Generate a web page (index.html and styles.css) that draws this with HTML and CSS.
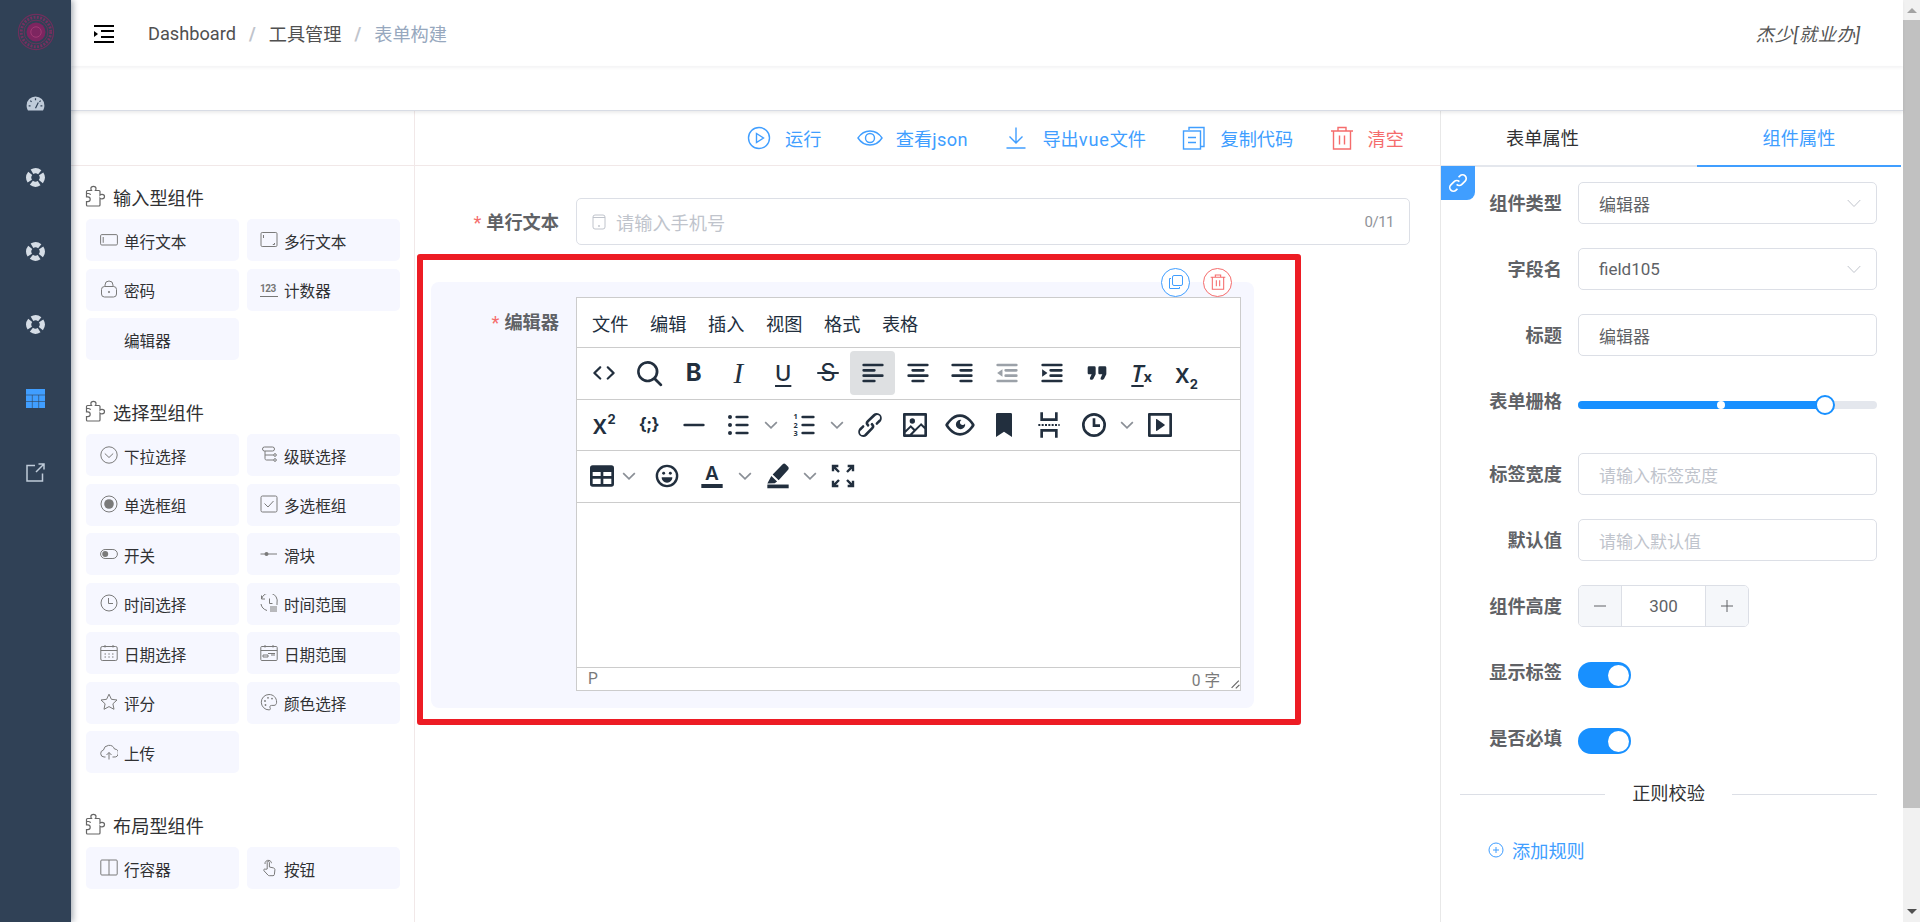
FILE: index.html
```html
<!DOCTYPE html>
<html lang="zh-CN">
<head>
<meta charset="utf-8">
<title>表单构建</title>
<link rel="stylesheet" href="styles.css">
</head>
<body>
<svg class="sprite" xmlns="http://www.w3.org/2000/svg">
  <!-- toolbar -->
  <symbol id="t-code" viewBox="0 0 24 24"><path d="M9.8 15.7c.3.3.3.8 0 1-.3.4-.9.4-1.2 0l-4.4-4.1a.8.8 0 010-1.2l4.4-4.2c.3-.3.9-.3 1.2 0 .3.3.3.8 0 1.1L6 12l3.8 3.7zm4.4 0c-.3.3-.3.8 0 1 .3.4.9.4 1.2 0l4.4-4.1c.3-.3.3-.9 0-1.2l-4.4-4.2a.8.8 0 00-1.2 0c-.3.3-.3.8 0 1.1L18 12l-3.8 3.7z"/></symbol>
  <symbol id="t-search" viewBox="0 0 24 24"><path d="M16 17.3a8 8 0 111.4-1.4l4.3 4.4a1 1 0 01-1.4 1.4l-4.4-4.3zm-5-.3a6 6 0 100-12 6 6 0 000 12z"/></symbol>
  <symbol id="t-al" viewBox="0 0 24 24"><path d="M5 5h14a1 1 0 010 2H5a1 1 0 110-2zm0 4h8a1 1 0 010 2H5a1 1 0 010-2zm0 8h8a1 1 0 010 2H5a1 1 0 010-2zm0-4h14a1 1 0 010 2H5a1 1 0 010-2z"/></symbol>
  <symbol id="t-ac" viewBox="0 0 24 24"><path d="M5 5h14a1 1 0 010 2H5a1 1 0 110-2zm3 4h8a1 1 0 010 2H8a1 1 0 010-2zm0 8h8a1 1 0 010 2H8a1 1 0 010-2zm-3-4h14a1 1 0 010 2H5a1 1 0 010-2z"/></symbol>
  <symbol id="t-ar" viewBox="0 0 24 24"><path d="M5 5h14a1 1 0 010 2H5a1 1 0 110-2zm6 4h8a1 1 0 010 2h-8a1 1 0 010-2zm0 8h8a1 1 0 010 2h-8a1 1 0 010-2zm-6-4h14a1 1 0 010 2H5a1 1 0 010-2z"/></symbol>
  <symbol id="t-outdent" viewBox="0 0 24 24"><path d="M5 5h14a1 1 0 010 2H5a1 1 0 110-2zm6 4h8a1 1 0 010 2h-8a1 1 0 010-2zm0 4h8a1 1 0 010 2h-8a1 1 0 010-2zM5 17h14a1 1 0 010 2H5a1 1 0 010-2zM8.600 9.200v5.600L4.600 12z"/></symbol>
  <symbol id="t-indent" viewBox="0 0 24 24"><path d="M5 5h14a1 1 0 010 2H5a1 1 0 110-2zm6 4h8a1 1 0 010 2h-8a1 1 0 010-2zm0 4h8a1 1 0 010 2h-8a1 1 0 010-2zM5 17h14a1 1 0 010 2H5a1 1 0 010-2zM4.600 9.200v5.600l4-2.800z"/></symbol>
  <symbol id="t-quote" viewBox="0 0 24 24"><path d="M7.500 17h.9c.4 0 .7-.2.9-.6L11 13V8a1 1 0 00-1-1H6a1 1 0 00-1 1v4c0 .6.4 1 1 1h2l-1.300 2.700a1 1 0 00.8 1.300zm8 0h.9c.4 0 .7-.2.9-.6L19 13V8a1 1 0 00-1-1h-4a1 1 0 00-1 1v4c0 .6.4 1 1 1h2l-1.300 2.700a1 1 0 00.8 1.300z"/></symbol>
  <symbol id="t-hr" viewBox="0 0 24 24"><rect x="4" y="11" width="16" height="2" rx="1"/></symbol>
  <symbol id="t-ul" viewBox="0 0 24 24"><path d="M11 5h8a1 1 0 010 2h-8a1 1 0 010-2zm0 6h8a1 1 0 010 2h-8a1 1 0 010-2zm0 6h8a1 1 0 010 2h-8a1 1 0 010-2z"/><circle cx="6" cy="6" r="1.500"/><circle cx="6" cy="12" r="1.500"/><circle cx="6" cy="18" r="1.500"/></symbol>
  <symbol id="t-ol" viewBox="0 0 24 24"><path d="M11 5h8a1 1 0 010 2h-8a1 1 0 010-2zm0 6h8a1 1 0 010 2h-8a1 1 0 010-2zm0 6h8a1 1 0 010 2h-8a1 1 0 010-2z"/><text x="4.200" y="7.800" class="t-num">1</text><text x="4.200" y="14" class="t-num">2</text><text x="4.200" y="20" class="t-num">3</text></symbol>
  <symbol id="t-link" viewBox="0 0 24 24"><path d="M6.200 12.300a1 1 0 011.400 1.400l-2 2a2 2 0 102.600 2.800l4.800-4.800a1 1 0 000-1.400 1 1 0 111.400-1.300 2.900 2.900 0 010 4L9.600 20a3.900 3.900 0 01-5.500-5.500l2-2zm11.600-.6a1 1 0 01-1.400-1.400l2-2a2 2 0 10-2.600-2.800L11 9.900a1 1 0 000 1.400 1 1 0 11-1.400 1.300 2.900 2.900 0 010-4L14.400 4a3.900 3.900 0 015.500 5.500l-2 2z"/></symbol>
  <symbol id="t-image" viewBox="0 0 24 24"><path d="M5 15.700l3.300-3.200c.3-.3.7-.3 1 0L12 15l4.100-4c.3-.4.8-.4 1 0l2 1.900V5H5v10.700zM5 18v1h3l2.800-2.900-2-2L5 17.900zm14-3l-2.500-2.400-6.400 6.500H19v-4zM4 3h16c.6 0 1 .4 1 1v16c0 .6-.4 1-1 1H4a1 1 0 01-1-1V4c0-.6.4-1 1-1zm6 8a2 2 0 100-4 2 2 0 000 4z"/></symbol>
  <symbol id="t-eye" viewBox="0 0 24 24"><path d="M3.500 12.500c.5.8 1.100 1.600 1.800 2.300 2 2 4.200 3.200 6.700 3.200s4.700-1.200 6.700-3.200a16.200 16.200 0 002.100-2.800 15.700 15.700 0 00-2.100-2.800c-2-2-4.200-3.200-6.700-3.200a9.300 9.300 0 00-6.700 3.200A16.200 16.200 0 003.200 12c0 .2.2.3.3.5zm-2.400-1l.7-1.200L4 7.800C6.200 5.400 8.900 4 12 4c3 0 5.800 1.400 8.100 3.800a18.200 18.200 0 012.800 3.700v1l-.7 1.200-2.100 2.500c-2.300 2.400-5 3.800-8.100 3.800-3 0-5.800-1.400-8.100-3.800a18.200 18.200 0 01-2.800-3.700 1 1 0 010-1zm12-3.300a2 2 0 102.700 2.600 3.500 3.500 0 11-2.700-2.600z"/></symbol>
  <symbol id="t-bookmark" viewBox="0 0 24 24"><path d="M6 4v17l6-4 6 4V4a1 1 0 00-1-1H7a1 1 0 00-1 1z"/></symbol>
  <symbol id="t-break" viewBox="0 0 24 24"><path d="M6.500 2.500v5.500h11V2.500M6.500 21.500V16h11v5.500" class="t-line"/><path d="M4 12h16" class="t-dots"/></symbol>
  <symbol id="t-clock" viewBox="0 0 24 24"><path d="M12 19a7 7 0 100-14 7 7 0 000 14zm0 2a9 9 0 110-18 9 9 0 010 18z"/><path d="M12 7v5.500h4.500" class="t-line"/></symbol>
  <symbol id="t-media" viewBox="0 0 24 24"><path d="M4 3h16c.6 0 1 .4 1 1v16c0 .6-.4 1-1 1H4a1 1 0 01-1-1V4c0-.6.4-1 1-1zm1 2v14h14V5H5zm4.800 2.600l5.600 4a.5.5 0 010 .8l-5.600 4A.5.5 0 019 16V8a.5.5 0 01.8-.4z"/></symbol>
  <symbol id="t-table" viewBox="0 0 24 24"><path fill-rule="evenodd" d="M5 4h14a2 2 0 012 2v12a2 2 0 01-2 2H5a2 2 0 01-2-2V6a2 2 0 012-2zm0 5v3h6V9H5zm8 0v3h6V9h-6zM5 14v4h6v-4H5zm8 0v4h6v-4h-6z"/></symbol>
  <symbol id="t-emoji" viewBox="0 0 24 24"><circle cx="12" cy="12" r="7.600" class="t-line t-thin"/><circle cx="9.500" cy="10" r="1.100"/><circle cx="14.500" cy="10" r="1.100"/><path d="M8 13h8c0 2.400-1.700 4-4 4s-4-1.600-4-4z"/></symbol>
  <symbol id="t-bar" viewBox="0 0 24 24"><rect x="4" y="18" width="16" height="3"/></symbol>
  <symbol id="t-brush" viewBox="0 0 24 24"><path d="M15.500 3.200a1.600 1.600 0 012.200 0l1.900 1.900c.6.6.6 1.600 0 2.200l-7.100 7.900-4.500-4.300zM7 12l4.300 4.200-1.800 1.200-5.500.2z"/><rect x="4" y="18.400" width="16" height="2.800"/></symbol>
  <symbol id="t-full" viewBox="0 0 24 24"><path d="M4.500 8.500V4.500h4M19.500 8.500V4.500h-4M4.500 15.500v4h4M19.500 15.500v4h-4M5 5l4 4M19 5l-4 4M5 19l4-4M19 19l-4-4" class="t-line t-thin"/></symbol>
  <symbol id="t-chev" viewBox="0 0 24 24"><path d="M5 8.500l7 7 7-7" class="t-chev"/></symbol>
  <!-- builder toolbar -->
  <symbol id="b-play" viewBox="0 0 24 24"><circle cx="12" cy="12" r="10.500"/><path d="M9.500 7.500l7 4.500-7 4.500z"/></symbol>
  <symbol id="b-eye" viewBox="0 0 26 24"><path d="M1 12c3-4.600 7-7 12-7s9 2.400 12 7c-3 4.600-7 7-12 7S4 16.600 1 12z"/><circle cx="13" cy="12" r="4.500"/></symbol>
  <symbol id="b-down" viewBox="0 0 24 24"><path d="M12 1.500v15.500M5.500 10.500l6.500 6.500 6.500-6.500M2.500 22h19"/></symbol>
  <symbol id="b-copy" viewBox="0 0 24 24"><path d="M7 4V1.500h15V20.500H18"/><rect x="1.500" y="5" width="17" height="18"/><path d="M6 11.500h8M6 16.500h8"/></symbol>
  <symbol id="b-trash" viewBox="0 0 24 24"><path d="M1 5h22M8 5V1.500h8V5M3.500 5v18h17V5M9.500 9.500v9M14.500 9.500v9"/></symbol>
  <symbol id="b-copy2" viewBox="0 0 16 16"><rect x="4.500" y="1.500" width="10" height="10" rx="1.500"/><path d="M3 4.500H1.500V14c0 .3.200.5.500.5h9.500V13"/></symbol>
  <symbol id="b-puzzle" viewBox="0 0 22 22"><path d="M1.500 8.500V6.500c0-.6.400-1 1-1h4a2.900 2.900 0 01-.6-2c0-1.300 1-2.200 2.500-2.200s2.600.9 2.600 2.200c0 .8-.2 1.500-.6 2h3.600c.6 0 1 .4 1 1v3.600c.5-.6 1.200-.8 2-.8 1.300 0 2.500 1 2.500 2.200s-1.200 2.300-2.500 2.300c-.8 0-1.500-.2-2-.7V20c0 .6-.4 1-1 1H2.500c-.6 0-1-.4-1-1v-3.400h1.300c1.400 0 2.400-1 2.400-2.300 0-1.400-1-2.500-2.400-2.500H1.500V8.500h2c1 0 1.900.6 1.900 1.500"/></symbol>
  <!-- component icons -->
  <symbol id="c-input" viewBox="0 0 18 18"><rect x=".6" y="3.600" width="16.800" height="10.400" rx="1.200"/><path d="M3.200 6v5.800"/></symbol>
  <symbol id="c-text" viewBox="0 0 18 18"><rect x="1" y="1.500" width="16" height="14" rx="1.200"/><path d="M3.500 4v3M14.500 13.500v-1.500M12.800 13.500h1.700"/></symbol>
  <symbol id="c-lock" viewBox="0 0 18 18"><rect x="1.500" y="6.500" width="15" height="10.500" rx="3"/><path d="M5 6.500V5a4 4 0 018 0v1.500"/><circle cx="9" cy="12" r=".7"/></symbol>
  <symbol id="c-select" viewBox="0 0 18 18"><circle cx="9" cy="9" r="8.200"/><path d="M4.800 7.500L9 11.500l4.200-4"/></symbol>
  <symbol id="c-casc" viewBox="0 0 18 18"><rect x="2.500" y="1" width="12" height="4" rx="2"/><path d="M5 5v7.500c0 1 .6 1.500 1.500 1.500h7M5 9h8.500"/><circle cx="15" cy="9" r="1.300"/><circle cx="15" cy="14" r="1.300"/></symbol>
  <symbol id="c-radio" viewBox="0 0 18 18"><circle cx="9" cy="9" r="8"/><circle cx="9" cy="9" r="4.800" class="c-fill"/></symbol>
  <symbol id="c-check" viewBox="0 0 18 18"><rect x="1" y="1" width="16" height="16" rx="1.500"/><path d="M4.500 8.500l3.500 3.500 5.500-6"/></symbol>
  <symbol id="c-switch" viewBox="0 0 18 18"><rect x=".6" y="4.500" width="16.800" height="9" rx="4.500"/><circle cx="5.200" cy="9" r="3" class="c-fill"/></symbol>
  <symbol id="c-slider" viewBox="0 0 18 18"><path d="M.5 9h16.500"/><circle cx="6.500" cy="9" r="2" class="c-fill"/></symbol>
  <symbol id="c-time" viewBox="0 0 18 18"><circle cx="9" cy="9" r="8"/><path d="M8.500 4v5.500h4.500"/></symbol>
  <symbol id="c-trange" viewBox="0 0 18 18"><path d="M1.500 5A8 8 0 0117 9v2M1.500 1.500V5H5M1 10c.4 3 2.600 5.500 6 6.500M9.500 4.500v5h3M10 13h7M10 15h7M10 17h7"/></symbol>
  <symbol id="c-date" viewBox="0 0 18 18"><rect x=".8" y="2.500" width="16.400" height="14" rx="1.500"/><path d="M.8 6.500h16.400M5 1v2.500M13 1v2.500M4.500 10h1.500M8.300 10h1.500M12 10h1.500M4.500 13h1.500M8.300 13h1.500M12 13h1.500"/></symbol>
  <symbol id="c-drange" viewBox="0 0 18 18"><rect x=".8" y="2.500" width="16.400" height="14" rx="1"/><path d="M.8 6.500h16.400M5 1v2.500M13 1v2.500M3 13v-2h5v2H3zM8 9.500h7M11 11h4"/></symbol>
  <symbol id="c-star" viewBox="0 0 18 18"><path d="M9 1.200l2.400 5.100 5.600.7-4.100 3.800 1.100 5.500L9 13.600l-5 2.700 1.100-5.500L1 7l5.600-.7z"/></symbol>
  <symbol id="c-palette" viewBox="0 0 18 18"><path d="M9 1.500a7.700 7.700 0 100 15.400c1.400 0 1.700-1 1.100-2-.8-1.300.1-2.500 1.500-2.500h2.400c1.600 0 2.600-1.200 2.600-3.200C16.600 4.600 13.400 1.500 9 1.500z"/><circle cx="5" cy="8" r=".9" class="c-fill"/><circle cx="8" cy="4.800" r=".9" class="c-fill"/><circle cx="12" cy="5.600" r=".9" class="c-fill"/><circle cx="5.500" cy="12" r=".9" class="c-fill"/></symbol>
  <symbol id="c-upload" viewBox="0 0 18 18"><path d="M5.500 14H4a3.500 3.500 0 01-.6-6.900A5.800 5.800 0 0114.500 6a4 4 0 01-.5 8h-1.500M9 16.500V9.500M6.500 12L9 9.500l2.500 2.500"/></symbol>
  <symbol id="c-row" viewBox="0 0 18 18"><rect x=".8" y="1" width="16.400" height="15" rx="1"/><path d="M9 1v15"/></symbol>
  <symbol id="c-button" viewBox="0 0 18 18"><path d="M7.200 10V3.500c0-1.600 2.200-1.600 2.200 0V8l4 .9c1 .2 1.600 1 1.500 2l-.5 4.500c0 .8-.6 1.300-1.400 1.300H9.300c-.5 0-1-.2-1.300-.6L4 11.800c-.9-1.200.8-2.600 1.800-1.500zM5 5a3.300 3.300 0 014-3.600c1.400.2 2.400 1.400 2.500 2.800"/></symbol>
  <symbol id="c-phone" viewBox="0 0 14 16"><rect x="1" y="1" width="12" height="14" rx="2"/><path d="M1 3.500h12"/><circle cx="7" cy="12" r=".6"/></symbol>
  <symbol id="c-blink" viewBox="0 0 24 24"><path d="M10.500 13.500a4 4 0 005.700 0l3.600-3.600a4 4 0 00-5.700-5.700l-1.500 1.500M13.500 10.500a4 4 0 00-5.700 0l-3.600 3.600a4 4 0 005.700 5.700l1.500-1.500"/></symbol>
  <symbol id="c-plus" viewBox="0 0 16 16"><circle cx="8" cy="8" r="7"/><path d="M5 8h6M8 5v6"/></symbol>
  <!-- sidebar -->
  <symbol id="s-ring" viewBox="0 0 20 20"><circle cx="10" cy="10" r="7.100" class="s-ringline"/></symbol>
</svg>

<div class="app">
  <aside class="sidebar">
    <div class="logo">
      <svg viewBox="0 0 40 40" class="logo-svg">
        <circle cx="20" cy="20" r="18.500" class="logo-out"/>
        <circle cx="20" cy="20" r="15.500" class="logo-dash"/>
        <circle cx="20" cy="20" r="12.500" class="logo-in"/>
        <circle cx="20" cy="20" r="10" class="logo-core"/>
        <circle cx="20" cy="20" r="5.500" class="logo-mid"/>
      </svg>
    </div>
    <div class="side-item">
      <svg viewBox="0 0 20 16" class="side-icon side-gauge">
        <path d="M10 .5A9.500 9.500 0 00.5 10c0 2.200.7 4 1.500 5.500h16c.8-1.500 1.500-3.300 1.500-5.500A9.500 9.500 0 0010 .5z" class="gauge-fill"/>
        <path d="M10 2.500v2M4.500 5l1.300 1.300M15.500 5l-1.300 1.300M2.700 10.500h2M15.300 10.500h2M10 13l3-6" class="gauge-mark"/>
      </svg>
    </div>
    <div class="side-item"><svg class="side-icon"><use href="#s-ring"/></svg></div>
    <div class="side-item"><svg class="side-icon"><use href="#s-ring"/></svg></div>
    <div class="side-item"><svg class="side-icon"><use href="#s-ring"/></svg></div>
    <div class="side-item">
      <svg viewBox="0 0 19 19" class="side-icon">
        <rect width="19" height="19" class="grid-fill"/>
        <path d="M0 6h19M0 12.500h19M6.300 6v13M12.700 6v13" class="grid-line"/>
      </svg>
    </div>
    <div class="side-item">
      <svg viewBox="0 0 19 19" class="side-icon">
        <path d="M9 2.500H1v15.500h15.500V10.500M10 9l8-8M12.500 1H18v5.500" class="ext-line"/>
      </svg>
    </div>
  </aside>

  <main class="page">
    <header class="topbar">
      <svg viewBox="0 0 20 18" class="hamburger">
        <rect width="20" height="2"/><rect x="7" y="5" width="13" height="2"/><rect x="7" y="11" width="13" height="2"/><rect y="16" width="20" height="2"/>
        <path d="M0 6v6l4-3z"/>
      </svg>
      <nav class="crumbs">
        <span>Dashboard</span><i>/</i><span>工具管理</span><i>/</i><span class="crumb-now">表单构建</span>
      </nav>
      <div class="user">杰少[就业办]</div>
    </header>
    <div class="tags"></div>

    <div class="builder">
      <section class="palette">
        <div class="palette-top"></div>
        <div class="palette-body">
          <div class="group">
            <h3 class="group-title"><svg class="puzzle"><use href="#b-puzzle"/></svg>输入型组件</h3>
            <div class="group-grid">
              <div class="comp"><svg class="ci"><use href="#c-input"/></svg>单行文本</div>
              <div class="comp"><svg class="ci"><use href="#c-text"/></svg>多行文本</div>
              <div class="comp"><svg class="ci"><use href="#c-lock"/></svg>密码</div>
              <div class="comp"><span class="ci ci-num">123</span>计数器</div>
              <div class="comp"><span class="ci"></span>编辑器</div>
            </div>
          </div>
          <div class="group">
            <h3 class="group-title"><svg class="puzzle"><use href="#b-puzzle"/></svg>选择型组件</h3>
            <div class="group-grid">
              <div class="comp"><svg class="ci"><use href="#c-select"/></svg>下拉选择</div>
              <div class="comp"><svg class="ci"><use href="#c-casc"/></svg>级联选择</div>
              <div class="comp"><svg class="ci"><use href="#c-radio"/></svg>单选框组</div>
              <div class="comp"><svg class="ci"><use href="#c-check"/></svg>多选框组</div>
              <div class="comp"><svg class="ci"><use href="#c-switch"/></svg>开关</div>
              <div class="comp"><svg class="ci"><use href="#c-slider"/></svg>滑块</div>
              <div class="comp"><svg class="ci"><use href="#c-time"/></svg>时间选择</div>
              <div class="comp"><svg class="ci"><use href="#c-trange"/></svg>时间范围</div>
              <div class="comp"><svg class="ci"><use href="#c-date"/></svg>日期选择</div>
              <div class="comp"><svg class="ci"><use href="#c-drange"/></svg>日期范围</div>
              <div class="comp"><svg class="ci"><use href="#c-star"/></svg>评分</div>
              <div class="comp"><svg class="ci"><use href="#c-palette"/></svg>颜色选择</div>
              <div class="comp"><svg class="ci"><use href="#c-upload"/></svg>上传</div>
            </div>
          </div>
          <div class="group">
            <h3 class="group-title"><svg class="puzzle"><use href="#b-puzzle"/></svg>布局型组件</h3>
            <div class="group-grid">
              <div class="comp"><svg class="ci"><use href="#c-row"/></svg>行容器</div>
              <div class="comp"><svg class="ci"><use href="#c-button"/></svg>按钮</div>
            </div>
          </div>
        </div>
      </section>

      <section class="canvas">
        <div class="actions">
          <a class="act"><svg class="act-icon"><use href="#b-play"/></svg>运行</a>
          <a class="act"><svg class="act-icon act-eye"><use href="#b-eye"/></svg><span>查看<span class="lat-json">json</span></span></a>
          <a class="act"><svg class="act-icon"><use href="#b-down"/></svg><span>导出<span class="lat-vue">vue</span>文件</span></a>
          <a class="act"><svg class="act-icon"><use href="#b-copy"/></svg>复制代码</a>
          <a class="act act-danger"><svg class="act-icon"><use href="#b-trash"/></svg>清空</a>
        </div>
        <div class="canvas-body">
          <div class="row-text">
            <label class="form-label"><em>*</em>单行文本</label>
            <div class="text-input">
              <svg class="phone"><use href="#c-phone"/></svg>
              <span class="ph">请输入手机号</span>
              <span class="count">0/11</span>
            </div>
          </div>

          <div class="card">
            <label class="form-label card-label"><em>*</em>编辑器</label>
            <div class="editor">
              <div class="menu">
                <span>文件</span><span>编辑</span><span>插入</span><span>视图</span><span>格式</span><span>表格</span>
              </div>
              <div class="tbar">
                <span class="tb"><svg class="ti"><use href="#t-code"/></svg></span>
                <span class="tb"><svg class="ti"><use href="#t-search"/></svg></span>
                <span class="tb tx tx-b">B</span>
                <span class="tb tx tx-i">I</span>
                <span class="tb tx tx-u">U</span>
                <span class="tb tx tx-s">S</span>
                <span class="tb tb-on"><svg class="ti"><use href="#t-al"/></svg></span>
                <span class="tb"><svg class="ti"><use href="#t-ac"/></svg></span>
                <span class="tb"><svg class="ti"><use href="#t-ar"/></svg></span>
                <span class="tb"><svg class="ti ti-off"><use href="#t-outdent"/></svg></span>
                <span class="tb"><svg class="ti"><use href="#t-indent"/></svg></span>
                <span class="tb"><svg class="ti"><use href="#t-quote"/></svg></span>
                <span class="tb tx tx-clear"><span><i>T</i><small>x</small></span></span>
                <span class="tb tx tx-x"><span>x<sub>2</sub></span></span>
              </div>
              <div class="tbar">
                <span class="tb tx tx-x"><span>x<sup>2</sup></span></span>
                <span class="tb tx tx-cs">{;}</span>
                <span class="tb"><svg class="ti"><use href="#t-hr"/></svg></span>
                <span class="tb"><svg class="ti"><use href="#t-ul"/></svg></span>
                <span class="cv"><svg class="tc"><use href="#t-chev"/></svg></span>
                <span class="tb"><svg class="ti"><use href="#t-ol"/></svg></span>
                <span class="cv"><svg class="tc"><use href="#t-chev"/></svg></span>
                <span class="tb"><svg class="ti"><use href="#t-link"/></svg></span>
                <span class="tb"><svg class="ti"><use href="#t-image"/></svg></span>
                <span class="tb"><svg class="ti"><use href="#t-eye"/></svg></span>
                <span class="tb"><svg class="ti"><use href="#t-bookmark"/></svg></span>
                <span class="tb"><svg class="ti"><use href="#t-break"/></svg></span>
                <span class="tb"><svg class="ti"><use href="#t-clock"/></svg></span>
                <span class="cv"><svg class="tc"><use href="#t-chev"/></svg></span>
                <span class="tb"><svg class="ti"><use href="#t-media"/></svg></span>
              </div>
              <div class="tbar">
                <span class="tb tb-table"><svg class="ti"><use href="#t-table"/></svg></span>
                <span class="cv cv-table"><svg class="tc"><use href="#t-chev"/></svg></span>
                <span class="tb"><svg class="ti"><use href="#t-emoji"/></svg></span>
                <span class="tb tx tx-a">A<svg class="ti ti-bar"><use href="#t-bar"/></svg></span>
                <span class="cv"><svg class="tc"><use href="#t-chev"/></svg></span>
                <span class="tb"><svg class="ti"><use href="#t-brush"/></svg></span>
                <span class="cv"><svg class="tc"><use href="#t-chev"/></svg></span>
                <span class="tb"><svg class="ti"><use href="#t-full"/></svg></span>
              </div>
              <div class="edit-area"></div>
              <div class="status">
                <span>P</span>
                <span class="status-count">0 字</span>
                <svg viewBox="0 0 10 10" class="resize"><path d="M9 3L3 9M9.500 6.500L6.500 9.500"/></svg>
              </div>
            </div>
            <span class="round round-blue"><svg class="round-icon"><use href="#b-copy2"/></svg></span>
            <span class="round round-red"><svg class="round-icon round-bin"><use href="#b-trash"/></svg></span>
          </div>

          <div class="annotation"></div>
        </div>
      </section>

      <section class="props">
        <div class="tabs">
          <div class="tab">表单属性</div>
          <div class="tab tab-on">组件属性</div>
        </div>
        <span class="link-badge"><svg><use href="#c-blink"/></svg></span>
        <div class="prop-form">
          <div class="field"><label>组件类型</label><div class="box">编辑器<svg viewBox="0 0 14 9" class="arrow"><path d="M.7 1L7 7.500 13.300 1"/></svg></div></div>
          <div class="field"><label>字段名</label><div class="box">field105<svg viewBox="0 0 14 9" class="arrow"><path d="M.7 1L7 7.500 13.300 1"/></svg></div></div>
          <div class="field"><label>标题</label><div class="box">编辑器</div></div>
          <div class="field field-slider"><label>表单栅格</label>
            <div class="slider"><div class="slider-fill"><span class="slider-stop"></span><span class="slider-thumb"></span></div></div>
          </div>
          <div class="field"><label>标签宽度</label><div class="box box-ph">请输入标签宽度</div></div>
          <div class="field"><label>默认值</label><div class="box box-ph">请输入默认值</div></div>
          <div class="field"><label>组件高度</label>
            <div class="number">
              <span class="num-btn"><svg viewBox="0 0 14 14" class="num-icon"><path d="M1 7h12"/></svg></span>
              <span class="num-val">300</span>
              <span class="num-btn num-plus"><svg viewBox="0 0 14 14" class="num-icon"><path d="M1 7h12M7 1v12"/></svg></span>
            </div>
          </div>
          <div class="field"><label>显示标签</label><span class="switch"></span></div>
          <div class="field"><label>是否必填</label><span class="switch"></span></div>
          <div class="divider"><span>正则校验</span></div>
          <div class="add-rule"><svg><use href="#c-plus"/></svg>添加规则</div>
        </div>
      </section>
    </div>
  </main>

  <div class="scrollbar">
    <span class="sb-up"></span>
    <div class="sb-thumb"></div>
    <span class="sb-down"></span>
  </div>
</div>
</body>
</html>
```

FILE: styles.css
```css
* { box-sizing: border-box; }
html, body { margin: 0; height: 100%; overflow: hidden; background: #fff; }
body { font-family: Roboto, "Noto Sans CJK SC", sans-serif; font-size: 18.2px; color: #303133; }
.sprite { display: none; }
.app { display: flex; width: 1920px; height: 922px; }

/* sidebar */
.sidebar { width: 71px; flex: none; background: #304156; box-shadow: 2px 0 6px rgba(0, 21, 41, .35); display: flex; flex-direction: column; align-items: center; position: relative; z-index: 2; }
.logo { height: 67px; display: flex; align-items: center; justify-content: center; padding-bottom: 3px; }
.logo-svg { width: 38px; height: 38px; fill: none; }
.logo-out { stroke: #6f2f5c; stroke-width: 1.2; }
.logo-dash { stroke: #75305f; stroke-width: 3; stroke-dasharray: 2 1.5; }
.logo-in { stroke: #6f2f5c; stroke-width: 1; }
.logo-core { fill: #7d2560; }
.logo-mid { fill: none; stroke: #a23a75; stroke-width: 1; }
.side-item { height: 73.700px; flex: none; display: flex; align-items: center; justify-content: center; width: 100%; }
.side-icon { width: 19px; height: 19px; fill: none; }
.side-gauge { height: 15px; }
.gauge-fill { fill: #bfcbd9; }
.gauge-mark { stroke: #304156; stroke-width: 1.3; fill: none; }
.s-ringline { fill: none; stroke: #d5dde6; stroke-width: 5.400; stroke-dasharray: 8.650 2.500; transform: rotate(-33deg); transform-origin: 10px 10px; }
.grid-fill { fill: #409eff; }
.grid-line { stroke: #304156; stroke-width: .6; fill: none; }
.ext-line { stroke: #bfcbd9; stroke-width: 1.5; fill: none; }

/* page */
.page { width: 1832px; flex: none; display: flex; flex-direction: column; height: 922px; }
.topbar { height: 66px; flex: none; display: flex; align-items: center; padding: 0 42px 0 23px; box-shadow: 0 2px 3px rgba(0, 21, 41, .05); position: relative; z-index: 1; }
.hamburger { width: 20px; height: 18px; fill: #000; margin-top: 2px; flex: none; }
.crumbs { margin-left: 34px; display: flex; align-items: center; color: #505050; }
.crumbs i { font-style: normal; font-weight: 700; color: #c0c4cc; margin: 0 13px; }
.crumb-now { color: #97a8be; }
.user { margin-left: auto; font-style: italic; color: #555; font-size: 18.200px; letter-spacing: .7px; }
.tags { height: 45px; flex: none; border-bottom: 1px solid #d8dce5; box-shadow: 0 2px 3px rgba(0, 0, 0, .08); position: relative; z-index: 1; }

.builder { flex: 1; display: flex; min-height: 0; }

/* palette */
.palette { width: 344px; flex: none; border-right: 1px solid #f1e8e8; }
.palette-top { height: 55px; border-bottom: 1px solid #f1e8e8; margin-right: -1px; }
.palette-body { padding: 9px 14px 0 15px; }
.group { margin-bottom: 30px; }
.group-title { margin: 0; height: 44px; display: flex; align-items: center; font-size: 18.2px; font-weight: 400; color: #303133; }
.puzzle { width: 22px; height: 22px; fill: none; stroke: #666; stroke-width: 1.2; margin-right: 6px; margin-left: -1px; margin-top: -2px; }
.group-grid { display: grid; grid-template-columns: 153px 153px; column-gap: 8px; row-gap: 7.5px; grid-auto-rows: 42px; }
.comp { background: #f6f7ff; border-radius: 5px; display: flex; align-items: center; padding: 1px 0 0 14px; font-size: 15.6px; color: #303133; }
.comp:nth-child(even) { padding-left: 13px; }
.ci { width: 18px; height: 18px; margin: -2px 6px 0 0; flex: none; fill: none; stroke: #7a7a7a; stroke-width: 1; }
.ci-num { font-size: 10px; font-weight: 700; color: #777; line-height: 14px; border-bottom: 1px solid #777; height: 15px; letter-spacing: -.5px; }
.c-fill { fill: #7a7a7a; stroke: none; }

/* canvas */
.canvas { flex: 1; min-width: 0; display: flex; flex-direction: column; }
.actions { height: 55px; flex: none; border-bottom: 1px solid #f1e8e8; display: flex; justify-content: flex-end; align-items: center; gap: 36.400px; padding-right: 36px; }
.act { display: flex; align-items: center; color: #409eff; }
.act-danger { color: #f56c6c; }
.lat-json { letter-spacing: .4px; }
.lat-vue { letter-spacing: .8px; }
.act-icon { width: 24px; height: 24px; margin-right: 14px; fill: none; stroke: currentColor; stroke-width: 1.4; }
.act-eye { width: 26px; margin-right: 13px; margin-left: -1px; }
.canvas-body { position: relative; flex: 1; padding-top: 32px; }
.row-text { display: flex; height: 47px; }
.form-label { font-weight: 700; color: #606266; width: 144px; flex: none; text-align: right; line-height: 49px; }
.form-label em { color: #f56c6c; font-style: normal; font-weight: 400; margin-right: 5px; }
.text-input { margin-left: 17px; width: 834px; height: 47px; border: 1px solid #dcdfe6; border-radius: 5px; display: flex; align-items: center; padding: 0 15px; }
.phone { width: 14px; height: 16px; fill: none; stroke: #c0c4cc; stroke-width: 1; margin-right: 10px; }
.ph { color: #c0c4cc; }
.count { margin-left: auto; font-size: 15px; letter-spacing: -.5px; color: #909399; }

.card { position: relative; margin: 37px 0 0 16px; width: 823px; height: 426px; padding: 15px 13px 17px 0; background: #f6f7ff; border-radius: 8px; display: flex; }
.card-label { width: 128px; line-height: 52px; }
.editor { margin-left: 17px; width: 665px; height: 394px; border: 1px solid #ccc; background: #fff; display: flex; flex-direction: column; }
.menu { height: 50px; flex: none; display: flex; align-items: center; gap: 21.600px; padding-left: 15px; border-bottom: 1px solid #ccc; color: #222f3e; }
.tbar { height: 51.500px; flex: none; display: flex; align-items: center; padding-left: 4.600px; border-bottom: 1px solid #ccc; }
.tb { width: 44.800px; height: 44px; flex: none; border-radius: 4px; display: flex; align-items: center; justify-content: center; color: #222f3e; position: relative; }
.tb-on { background: #dee0e2; }
.tb-table { width: 41px; }
.ti { width: 32px; height: 32px; fill: #222f3e; }
.ti-off { fill: rgba(34, 47, 62, .45); }
.t-line { fill: none; stroke: #222f3e; stroke-width: 2; }
.t-thin { stroke-width: 1.800; }
.t-dots { fill: none; stroke: #222f3e; stroke-width: 1.500; stroke-dasharray: 1.500 1; }
.t-num { font-size: 5.500px; font-weight: 700; font-family: "Open Sans", sans-serif; }
.cv { width: 21px; flex: none; display: flex; justify-content: center; }
.cv-table { margin: 0 5.100px 0 -4.100px; }
.tc { width: 20px; height: 20px; fill: none; }
.t-chev { fill: none; stroke: #8a8f96; stroke-width: 2; }
.tx { font-family: Inter, sans-serif; line-height: 1; }
.tx-b { font-size: 24px; font-weight: 700; }
.tx-i { font-family: "Liberation Serif", serif; font-style: italic; font-size: 29px; }
.tx-u { font-size: 22px; font-weight: 500; text-decoration: underline; text-underline-offset: 4px; text-decoration-thickness: 2px; }
.tx-s { font-size: 24px; font-weight: 400; }
.tx-s::after { content: ""; position: absolute; left: 11.500px; right: 11.500px; top: 21px; height: 2px; background: #222f3e; border-radius: 1px; }
.tx-clear { font-size: 24px; font-family: "Open Sans", sans-serif; }
.tx-clear i { text-decoration: underline; text-underline-offset: 3px; text-decoration-thickness: 2px; font-weight: 600; }
.tx-clear small { font-size: 14px; font-weight: 700; }
.tx-x { font-size: 27px; font-weight: 500; }
.tx-x sub, .tx-x sup { font-size: 13px; font-weight: 700; line-height: 0; }
.tx-cs { font-size: 17px; font-weight: 700; letter-spacing: -.5px; }
.tx-a { font-size: 19px; font-weight: 600; padding-bottom: 6px; }
.ti-bar { position: absolute; left: 6.400px; top: 6px; }
.edit-area { height: 165px; flex: none; border-bottom: 1px solid #ccc; }
.status { flex: 1; display: flex; align-items: center; padding: 0 0 0 11px; font-size: 15.600px; color: #7a7a7a; position: relative; }
.status-count { margin-left: auto; margin-right: 20px; }
.resize { position: absolute; right: 0; bottom: 1px; width: 12px; height: 12px; fill: none; stroke: #666; stroke-width: 1; }

.round { position: absolute; width: 29px; height: 29px; top: -14.500px; border-radius: 50%; background: #fff; display: flex; align-items: center; justify-content: center; border: 1px solid; }
.round-blue { left: 730px; border-color: #409eff; }
.round-red { left: 772px; border-color: #f56c6c; color: #f56c6c; }
.round-icon { width: 16px; height: 16px; fill: none; stroke: #409eff; stroke-width: 1; }
.round-bin { stroke: #f56c6c; stroke-width: 1.600; }
.annotation { position: absolute; left: 2px; top: 88px; width: 884px; height: 471px; border: 6px solid #ed1c24; border-radius: 3px; pointer-events: none; }

/* props */
.props { width: 463px; flex: none; border-left: 1px solid #e8e8e8; position: relative; }
.tabs { height: 56px; display: grid; grid-template-columns: 203px 204px; column-gap: 53px; border-bottom: 2px solid #e4e7ed; width: 460px; }
.tab { text-align: center; line-height: 56px; height: 56px; color: #303133; }
.tab-on { color: #409eff; border-bottom: 2px solid #409eff; }
.link-badge { position: absolute; left: 0; top: 55px; width: 34px; height: 34px; background: #409eff; border-bottom-right-radius: 8px; display: flex; align-items: center; justify-content: center; }
.link-badge svg { width: 22px; height: 22px; fill: none; stroke: #fff; stroke-width: 1.800; }
.prop-form { padding: 15px 0 0 19px; }
.field { display: flex; height: 42px; margin-bottom: 24px; }
.field label { width: 102px; flex: none; text-align: right; font-weight: 700; color: #606266; line-height: 44px; }
.field-slider { height: 49px; }
.field > label + * { margin-left: 16px; }
.box { width: 299px; height: 42px; border: 1px solid #dcdfe6; border-radius: 5px; display: flex; align-items: center; padding-left: 20px; font-size: 17px; color: #606266; }
.box-ph { color: #c0c4cc; }
.arrow { margin-left: auto; margin-right: 15px; width: 14px; height: 9px; fill: none; stroke: #c0c4cc; stroke-width: 1; }
.slider { width: 299px; height: 8px; margin-top: 21px; background: #e4e7ed; border-radius: 4px; }
.slider-fill { position: relative; width: 247px; height: 8px; background: #1890ff; border-radius: 4px; }
.slider-stop { position: absolute; left: 139px; top: 0; width: 8px; height: 8px; border-radius: 50%; background: #fff; }
.slider-thumb { position: absolute; right: -10px; top: -6px; width: 20px; height: 20px; border-radius: 50%; background: #fff; border: 2.600px solid #1890ff; }
.number { width: 171px; height: 42px; border: 1px solid #dcdfe6; border-radius: 5px; display: flex; font-size: 17px; color: #606266; }
.num-btn { width: 43px; flex: none; background: #f5f7fa; display: flex; align-items: center; justify-content: center; border-right: 1px solid #dcdfe6; border-radius: 4px 0 0 4px; }
.num-plus { border-right: 0; border-left: 1px solid #dcdfe6; border-radius: 0 4px 4px 0; }
.num-icon { width: 14px; height: 14px; fill: none; stroke: #606266; stroke-width: 1; }
.num-val { flex: 1; text-align: center; line-height: 40px; }
.switch { position: relative; width: 53px; height: 26px; margin-top: 11px; background: #1890ff; border-radius: 13px; }
.switch::after { content: ""; position: absolute; right: 2.500px; top: 2.500px; width: 21px; height: 21px; background: #fff; border-radius: 50%; }
.divider { display: flex; align-items: center; width: 417px; gap: 27px; margin-top: -2px; line-height: 26px; color: #303133; }
.divider::before, .divider::after { content: ""; flex: 1; height: 1px; background: #dcdfe6; }
.add-rule { display: flex; align-items: center; color: #409eff; margin: 30px 0 0 28px; }
.add-rule svg { width: 16px; height: 16px; fill: none; stroke: #409eff; stroke-width: 1; margin-right: 8px; }

/* scrollbar */
.scrollbar { width: 17px; flex: none; background: #f1f1f1; display: flex; flex-direction: column; align-items: center; position: relative; }
.sb-up { margin-top: 8px; width: 0; height: 0; border: 5px solid transparent; border-top: 0; border-bottom: 5px solid #a3a3a3; }
.sb-thumb { position: absolute; top: 20px; left: 0; width: 17px; height: 788px; background: #c1c1c1; }
.sb-down { position: absolute; bottom: 8px; width: 0; height: 0; border: 5px solid transparent; border-bottom: 0; border-top: 5px solid #505050; }
```
